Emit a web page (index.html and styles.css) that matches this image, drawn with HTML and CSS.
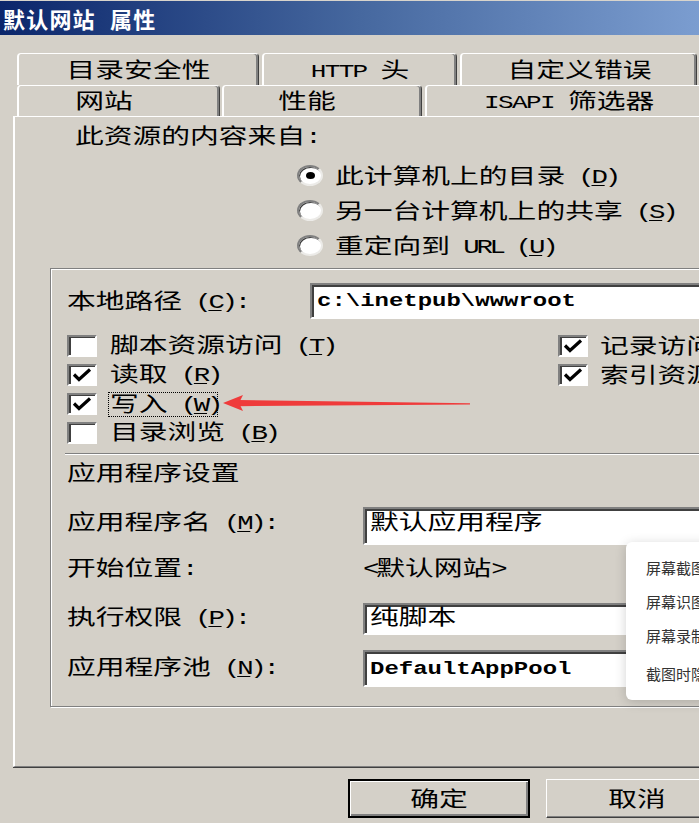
FILE: index.html
```html
<!DOCTYPE html>
<html lang="zh-CN">
<head>
<meta charset="utf-8">
<title>默认网站 属性</title>
<link rel="stylesheet" href="styles.css">
</head>
<body>
<div class="window">
  <div class="titlebar"><span class="title">默认网站 属性</span></div>

  <div class="tabs">
    <div class="tab-row back">
      <div class="tab t1"><span class="w">目录安全性</span></div>
      <div class="tab t2"><span class="w"><span class="a tabl">HTTP </span>头</span></div>
      <div class="tab t3"><span class="w">自定义错误</span></div>
      <div class="tab t4"></div>
    </div>
    <div class="tab-row front">
      <div class="tab f1"><span class="w">网站</span></div>
      <div class="tab f2"><span class="w">性能</span></div>
      <div class="tab f3"><span class="w"><span class="a tabl">ISAPI </span>筛选器</span></div>
    </div>
  </div>

  <div class="panel">
    <div class="src-title"><span class="w">此资源的内容来自<span class="a">:</span></span></div>
    <div class="radios">
      <div class="radio-row"><span class="radio on"></span><span class="w">此计算机上的目录<span class="a"> (<u>D</u>)</span></span></div>
      <div class="radio-row"><span class="radio"></span><span class="w">另一台计算机上的共享<span class="a"> (<u>S</u>)</span></span></div>
      <div class="radio-row"><span class="radio"></span><span class="w">重定向到<span class="a"> URL (<u>U</u>)</span></span></div>
    </div>

    <div class="group">
      <div class="path-row">
        <div class="label-path"><span class="w">本地路径<span class="a"> (<u>C</u>):</span></span></div>
        <div class="field"><span class="m mono">c:\inetpub\wwwroot</span></div>
      </div>

      <div class="checks">
        <div class="col-left">
          <div class="check-row"><span class="cb"></span><span class="w lbl">脚本资源访问<span class="a"> (<u>T</u>)</span></span></div>
          <div class="check-row"><span class="cb"><svg width="26" height="18" viewBox="0 0 26 18"><path d="M5 8.5 L10 13.5 L21 3.5" fill="none" stroke="#000" stroke-width="3.2"/></svg></span><span class="w lbl">读取<span class="a"> (<u>R</u>)</span></span></div>
          <div class="check-row"><span class="cb"><svg width="26" height="18" viewBox="0 0 26 18"><path d="M5 8.5 L10 13.5 L21 3.5" fill="none" stroke="#000" stroke-width="3.2"/></svg></span><span class="focus"><span class="w">写入<span class="a"> (<u>W</u>)</span></span></span></div>
          <div class="check-row"><span class="cb"></span><span class="w lbl">目录浏览<span class="a"> (<u>B</u>)</span></span></div>
        </div>
        <div class="col-right">
          <div class="check-row"><span class="cb"><svg width="26" height="18" viewBox="0 0 26 18"><path d="M5 8.5 L10 13.5 L21 3.5" fill="none" stroke="#000" stroke-width="3.2"/></svg></span><span class="w lbl-r">记录访问</span></div>
          <div class="check-row"><span class="cb"><svg width="26" height="18" viewBox="0 0 26 18"><path d="M5 8.5 L10 13.5 L21 3.5" fill="none" stroke="#000" stroke-width="3.2"/></svg></span><span class="w lbl-r">索引资源</span></div>
        </div>
      </div>

      <div class="sep"></div>
      <div class="app-title"><span class="w">应用程序设置</span></div>

      <div class="app-row r-name">
        <div class="app-label"><span class="w">应用程序名<span class="a"> (<u>M</u>):</span></span></div>
        <div class="field top"><span class="w">默认应用程序</span></div>
      </div>
      <div class="app-row r-start">
        <div class="app-label"><span class="w">开始位置<span class="a">:</span></span></div>
        <div class="app-value"><span class="w"><span class="a">&lt;</span>默认网站<span class="a">&gt;</span></span></div>
      </div>
      <div class="app-row r-perm">
        <div class="app-label"><span class="w">执行权限<span class="a"> (<u>P</u>):</span></span></div>
        <div class="field top"><span class="w">纯脚本</span></div>
      </div>
      <div class="app-row r-pool">
        <div class="app-label"><span class="w">应用程序池<span class="a"> (<u>N</u>):</span></span></div>
        <div class="field"><span class="m mono">DefaultAppPool</span></div>
      </div>
    </div>
  </div>

  <div class="buttons">
    <div class="btn btn-ok"><span class="w">确定</span></div>
    <div class="btn btn-cancel"><span class="w">取消</span></div>
  </div>
</div>

<svg class="arrow" width="260" height="22" viewBox="0 0 260 22">
  <polygon points="18,8 250,11.2 250,12.6 18,14.2" fill="#ef3b3b"/>
  <polygon points="3,11 23,3 19,11 23,19" fill="#ef3b3b"/>
</svg>

<div class="ctx">
  <div class="ctx-item">屏幕截图</div>
  <div class="ctx-item">屏幕识图</div>
  <div class="ctx-item">屏幕录制</div>
  <div class="ctx-sep"></div>
  <div class="ctx-item">截图时隐</div>
</div>
</body>
</html>
```

FILE: styles.css
```css
* { box-sizing: border-box; }
html, body { margin: 0; padding: 0; }
body {
  width: 699px;
  height: 823px;
  overflow: hidden;
  position: relative;
  background: #d4d0c8;
  color: #000;
  font-family: "Noto Sans CJK SC", sans-serif;
  font-size: 21px;
}
u { text-decoration-thickness: 1px; text-underline-offset: 2px; }

.window { width: 820px; }

/* stretched dialog text (the screenshot is wider than tall) */
.w, .m {
  display: inline-block;
  white-space: nowrap;
  transform-origin: 0 50%;
}
.w { transform: translateY(-2px) scaleX(1.37); }
.m { transform: scaleX(1.37); }

/* half-width latin parts */
.a {
  font-family: "Liberation Mono", monospace;
  font-size: 20px;
  letter-spacing: -2.4px;
  line-height: 1;
  white-space: pre;
}
.a.tabl { font-size: 19px; letter-spacing: -1.2px; }

/* title bar */
.titlebar {
  height: 35px;
  border-top: 1px solid #d8d4cc;
  background: linear-gradient(90deg, #0b266b 0px, #46689f 360px, #7b9dd0 699px, #8fb0de 820px);
  padding-left: 3px;
  display: flex;
  align-items: center;
}
.title {
  font-family: "Noto Sans CJK SC", sans-serif;
  font-weight: 700;
  font-size: 22px;
  letter-spacing: 1.2px;
  word-spacing: 8px;
  line-height: 1;
  color: #fff;
}

/* tabs */
.tabs { margin-top: 18px; }
.tab-row { display: flex; padding-left: 17px; height: 32px; }
.tab-row.front { height: 31px; }
.tab {
  flex: none;
  height: 100%;
  background: #d4d0c8;
  border-top: 1px solid #fff;
  border-left: 2px solid #fff;
  border-right: 1px solid #404040;
  box-shadow: inset -2px 0 0 #808080;
  border-radius: 4px 4px 0 0;
  display: flex;
  align-items: center;
  justify-content: center;
  line-height: 28px;
}
.tab .w { transform-origin: 50% 50%; }
.t1 { width: 242px; }
.t2 { width: 195px; margin-left: 3px; }
.t3 { width: 237px; margin-left: 3px; }
.t4 { width: 120px; margin-left: 3px; }
.f1 { width: 203px; padding-right: 30px; }
.f2 { width: 200px; margin-left: 2px; padding-right: 32px; }
.f3 { width: 320px; margin-left: 3px; padding-right: 32px; }

/* main panel */
.panel {
  width: 800px;
  height: 651px;
  margin-left: 13px;
  border-top: 1px solid #fff;
  border-left: 2px solid #fff;
  border-bottom: 1px solid #808080;
  box-shadow: 0 1px 0 #404040;
}
.src-title { margin: 7px 0 0 60px; height: 24px; line-height: 24px; }

.radios { margin: 10px 0 0 282px; }
.radio-row { display: flex; align-items: center; height: 35px; line-height: 28px; }
.radio {
  flex: none;
  width: 26px;
  height: 21px;
  border-radius: 50%;
  background: #fff;
  border: 2px solid;
  border-color: #808080 #ecebe8 #ecebe8 #808080;
  box-shadow: inset 1px 1px 0 #404040;
  display: flex;
  align-items: center;
  justify-content: center;
}
.radio.on::after {
  content: "";
  width: 9px;
  height: 7px;
  border-radius: 50%;
  background: #000;
}
.radio-row > .w { margin-left: 12px; }

/* group box */
.group {
  margin: 5px 0 0 35px;
  height: 439px;
  border: 1px solid #808080;
  box-shadow: inset 1px 1px 0 #fff, 1px 1px 0 #fff;
  padding-left: 16px;
}
.path-row { display: flex; align-items: center; margin-top: 14px; height: 36px; line-height: 28px; }
.label-path { width: 243px; flex: none; }

.field {
  flex: 1;
  height: 100%;
  background: #fff;
  border: 2px solid;
  border-color: #808080 #fff #fff #808080;
  box-shadow: inset 2px 2px 0 #404040;
  padding-left: 5px;
  display: flex;
  align-items: center;
  line-height: 26px;
}
.field.top { align-items: flex-start; }
.mono {
  font-family: "Liberation Mono", monospace;
  font-weight: 700;
  font-size: 17.5px;
}

.checks { display: flex; margin-top: 12px; }
.col-left { width: 491px; flex: none; }
.check-row { display: flex; align-items: center; height: 29px; line-height: 24px; }
.cb {
  flex: none;
  width: 30px;
  height: 22px;
  background: #fff;
  border: 2px solid;
  border-color: #808080 #fff #fff #808080;
  box-shadow: inset 2px 1px 0 #404040;
}
.cb svg { display: block; }
.lbl { margin-left: 13px; }
.lbl-r { margin-left: 12px; }
.focus {
  margin: 2px 0 0 11px;
  width: 110px;
  height: 25px;
  border: 1px dotted #000;
  padding-left: 1px;
  display: flex;
  align-items: center;
}

.sep {
  margin: 6px 0 0 -2px;
  height: 2px;
  border-top: 1px solid #808080;
  border-bottom: 1px solid #fff;
}
.app-title { margin-top: 6px; height: 24px; line-height: 24px; }

.app-row { display: flex; align-items: flex-start; }
.app-label { width: 296px; flex: none; }
.r-name { margin-top: 22px; height: 38px; }
.r-name .app-label { line-height: 30px; }
.r-start { margin-top: 10px; height: 26px; line-height: 26px; }
.r-perm { margin-top: 22px; height: 32px; }
.r-perm .app-label { line-height: 28px; }
.r-perm .field { line-height: 24px; }
.r-pool { margin-top: 15px; height: 37px; }
.r-pool .app-label { line-height: 34px; }

/* buttons */
.buttons { display: flex; margin-top: 12px; padding-left: 348px; gap: 16px; }
.btn {
  flex: none;
  width: 182px;
  height: 39px;
  background: #d4d0c8;
  display: flex;
  align-items: center;
  justify-content: center;
  line-height: 28px;
  border: 1px solid;
  border-color: #fff #404040 #404040 #fff;
  box-shadow: inset -1px -1px 0 #808080;
}
.btn .w { transform-origin: 50% 50%; }
.btn-ok {
  border: 2px solid #000;
  box-shadow: inset 1px 1px 0 #fff, inset -2px -2px 0 #808080;
}

/* overlays */
.arrow { position: absolute; left: 220px; top: 392px; }

.ctx {
  position: absolute;
  left: 626px;
  top: 542px;
  width: 210px;
  height: 158px;
  background: #fff;
  border-radius: 6px;
  box-shadow: 0 2px 12px rgba(0, 0, 0, 0.18);
  padding: 9px 0 0 20px;
  font-family: "Noto Sans CJK SC", sans-serif;
  font-size: 15px;
  color: #333;
}
.ctx-item { height: 34px; line-height: 34px; white-space: nowrap; }
.ctx-sep { height: 1px; margin: 1px 0 2px -20px; }
```
